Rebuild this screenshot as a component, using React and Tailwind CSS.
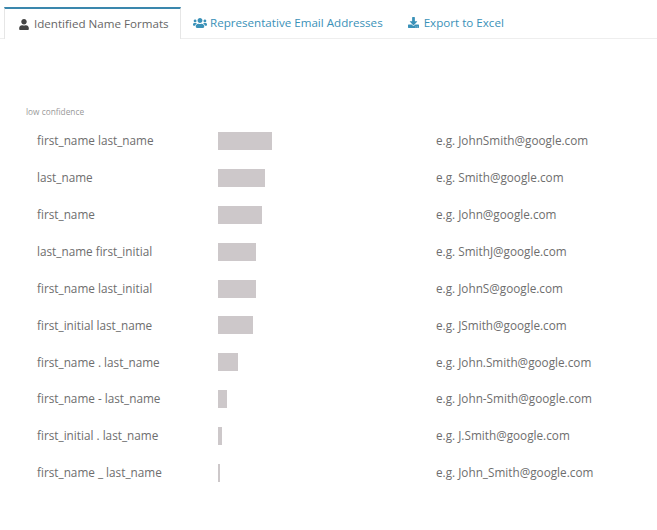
import { FaUser, FaUsers, FaDownload } from "react-icons/fa";

const formats = [
  { name: "first_name last_name", width: 54, email: "e.g. JohnSmith@google.com" },
  { name: "last_name", width: 47, email: "e.g. Smith@google.com" },
  { name: "first_name", width: 44, email: "e.g. John@google.com" },
  { name: "last_name first_initial", width: 38, email: "e.g. SmithJ@google.com" },
  { name: "first_name last_initial", width: 38, email: "e.g. JohnS@google.com" },
  { name: "first_initial last_name", width: 35, email: "e.g. JSmith@google.com" },
  { name: "first_name . last_name", width: 20, email: "e.g. John.Smith@google.com" },
  { name: "first_name - last_name", width: 9, email: "e.g. John-Smith@google.com" },
  { name: "first_initial . last_name", width: 4, email: "e.g. J.Smith@google.com" },
  { name: "first_name _ last_name", width: 2, email: "e.g. John_Smith@google.com" },
];

export default function App() {
  return (
    <div className="h-[530px] w-[657px] overflow-hidden bg-white font-['Open_Sans',sans-serif] text-[11.75px] text-[#666]">
      <nav className="flex h-[39px] items-end border-b border-[#eeeeee] pl-1 pt-[7px] text-[11.62px]">
        <div className="-mb-px flex h-[32px] w-[177px] items-center gap-[5px] border-x border-t-2 border-x-[#e6e6e6] border-t-[#3a87ad] border-b-white bg-white pl-[14px] text-[#666]">
          <FaUser className="h-[11px] w-[10px] text-[#444]" />
          <span>Identified Name Formats</span>
        </div>
        <div className="flex h-[31px] items-center gap-[3px] pl-3 text-[#3a91b8]">
          <FaUsers className="h-[14px] w-[14px]" />
          <span>Representative Email Addresses</span>
        </div>
        <div className="flex h-[31px] items-center gap-[5px] pl-[25px] text-[#3a91b8]">
          <FaDownload className="h-[11px] w-[11px]" />
          <span>Export to Excel</span>
        </div>
      </nav>

      <section className="pl-[26px] pt-[68px]">
        <p className="text-[8.3px] leading-[10px] text-[#999]">low confidence</p>
        <div className="mt-[15px] flex flex-col gap-[18.9px]">
          {formats.map((format) => (
            <div key={format.name} className="flex h-[18px] items-center">
              <span className="ml-[11px] w-[181px] text-[#6e6e6e]">{format.name}</span>
              <div className="w-[218px]">
                <div className="h-[18px] bg-[#cdc8ca]" style={{ width: format.width }} />
              </div>
              <span className="text-[#6e6e6e]">{format.email}</span>
            </div>
          ))}
        </div>
      </section>
    </div>
  );
}
